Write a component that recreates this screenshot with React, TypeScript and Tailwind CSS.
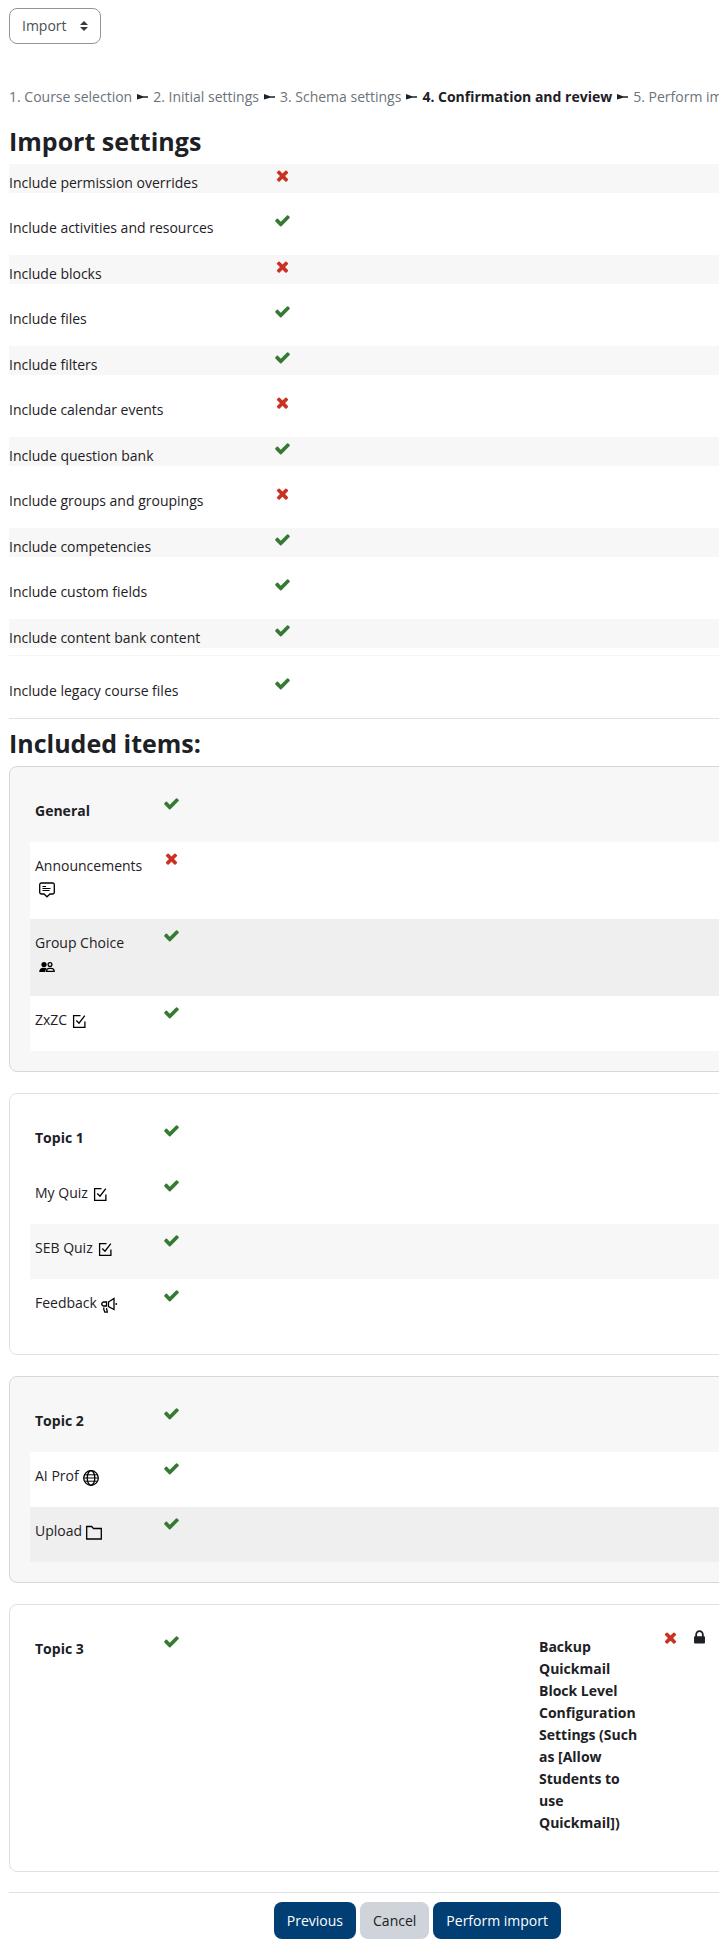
import clsx from 'clsx';
import type { ReactNode } from 'react';

type ActivityIcon = 'forum' | 'group' | 'quiz' | 'feedback' | 'url' | 'folder';

interface Activity {
  name: string;
  included: boolean;
  icon: ActivityIcon;
}

interface Section {
  title: string;
  shaded: boolean;
  activities: Activity[];
}

const STEPS = [
  '1. Course selection',
  '2. Initial settings',
  '3. Schema settings',
  '4. Confirmation and review',
  '5. Perform import',
];
const CURRENT_STEP = 3;

const SETTINGS = [
  { label: 'Include permission overrides', included: false },
  { label: 'Include activities and resources', included: true },
  { label: 'Include blocks', included: false },
  { label: 'Include files', included: true },
  { label: 'Include filters', included: true },
  { label: 'Include calendar events', included: false },
  { label: 'Include question bank', included: true },
  { label: 'Include groups and groupings', included: false },
  { label: 'Include competencies', included: true },
  { label: 'Include custom fields', included: true },
  { label: 'Include content bank content', included: true },
];

const SECTIONS: Section[] = [
  {
    title: 'General',
    shaded: true,
    activities: [
      { name: 'Announcements', included: false, icon: 'forum' },
      { name: 'Group Choice', included: true, icon: 'group' },
      { name: 'ZxZC', included: true, icon: 'quiz' },
    ],
  },
  {
    title: 'Topic 1',
    shaded: false,
    activities: [
      { name: 'My Quiz', included: true, icon: 'quiz' },
      { name: 'SEB Quiz', included: true, icon: 'quiz' },
      { name: 'Feedback', included: true, icon: 'feedback' },
    ],
  },
  {
    title: 'Topic 2',
    shaded: true,
    activities: [
      { name: 'AI Prof', included: true, icon: 'url' },
      { name: 'Upload', included: true, icon: 'folder' },
    ],
  },
];

function StatusIcon({ included }: { included: boolean }) {
  return included ? (
    <svg viewBox="0 0 1792 1792" className="size-[17px] fill-[#357a32]" role="img" aria-label="Yes">
      <path d="M1671 566q0 40-28 68l-724 724-136 136q-28 28-68 28t-68-28l-136-136-362-362q-28-28-28-68t28-68l136-136q28-28 68-28t68 28l294 295 656-657q28-28 68-28t68 28l136 136q28 28 28 68z" />
    </svg>
  ) : (
    <svg viewBox="0 0 1792 1792" className="size-[17px] fill-[#ca3120]" role="img" aria-label="No">
      <path d="M1490 1322q0 40-28 68l-136 136q-28 28-68 28t-68-28l-294-294-294 294q-28 28-68 28t-68-28l-136-136q-28-28-28-68t28-68l294-294-294-294q-28-28-28-68t28-68l136-136q28-28 68-28t68 28l294 294 294-294q28-28 68-28t68 28l136 136q28 28 28 68t-28 68l-294 294 294 294q28 28 28 68z" />
    </svg>
  );
}

function LockIcon() {
  return (
    <svg viewBox="0 0 1792 1792" className="size-[17px] fill-[#1d2125]" role="img" aria-label="Locked">
      <path d="M640 768h512v-192q0-106-75-181t-181-75-181 75-75 181v192zm832 96v576q0 40-28 68t-68 28h-960q-40 0-68-28t-28-68v-576q0-40 28-68t68-28h32v-192q0-184 132-316t316-132 316 132 132 316v192h32q40 0 68 28t28 68z" />
    </svg>
  );
}

const ICON_SHAPES: Record<ActivityIcon, ReactNode> = {
  forum: (
    <>
      <path d="M2.5 1h11a1.800 1.800 0 0 1 1.800 1.800v7.400a1.800 1.800 0 0 1-1.800 1.800H11l-3 2.800L5 12H2.500A1.800 1.800 0 0 1 .7 10.200V2.800A1.800 1.800 0 0 1 2.500 1z" />
      <path strokeWidth="1" d="M3.500 4.500h3.500M3.500 6.500h8M3.500 8.500h7" />
    </>
  ),
  group: (
    <>
      <g fill="currentColor" stroke="none">
        <circle cx="5" cy="5.500" r="2.600" />
        <path d="M.2 13c0-2.600 1.600-4.200 3.800-4.200h1.600c.8 0 1.500.3 2 .8-.8.8-1.300 1.900-1.300 3.400z" />
      </g>
      <circle cx="11" cy="5.500" r="1.900" />
      <path d="M7.500 12.400c0-2 1.200-3.100 2.800-3.100h1.600c1.600 0 3.300 1.100 3.300 3.100z" />
    </>
  ),
  quiz: (
    <>
      <path d="M9.500 1.700H2.600v11.600h11.300V7.500" />
      <path d="M5.300 6.500 8 9.200l5.800-7.500" />
    </>
  ),
  feedback: (
    <>
      <path d="M7.500 5 13 1.500v11L7.500 9.500z" />
      <path d="M5.500 5H2.300L.8 6.200v1.600L2.300 9h3.200z" />
      <path d="M2.800 10.500v2l1 2.700h2.500l-.8-4M15.200 6v2" />
    </>
  ),
  url: (
    <>
      <circle cx="8" cy="8" r="7.300" />
      <ellipse cx="8" cy="8" rx="3.800" ry="7.300" />
      <path d="M.8 8h14.400M2 4.800h12M2 11.200h12" strokeWidth="1" />
    </>
  ),
  folder: <path d="M.7 14V1.500h5l1.800 2h7.800V14z" />,
};

function ModuleIcon({ name }: { name: ActivityIcon }) {
  return (
    <svg
      viewBox="0 0 16 16"
      className="ml-1 inline-block size-4 align-[-5px] text-black"
      fill="none"
      stroke="currentColor"
      strokeWidth="1.300"
      aria-hidden="true"
    >
      {ICON_SHAPES[name]}
    </svg>
  );
}

function SettingRow({ label, included }: { label: string; included: boolean }) {
  return (
    <div className="flex">
      <div className="w-[265px] shrink-0 pt-2">{label}</div>
      <div className="pt-[3px]">
        <StatusIcon included={included} />
      </div>
    </div>
  );
}

function ItemRow({ children, included }: { children: ReactNode; included: boolean }) {
  return (
    <div className="flex min-h-[55px] pl-[5px]">
      <div className="w-[128px] shrink-0 pt-[13px] pr-5 pb-5">{children}</div>
      <div className="pt-2">
        <StatusIcon included={included} />
      </div>
    </div>
  );
}

function SectionCard({ section }: { section: Section }) {
  return (
    <section
      className={clsx(
        'mb-[21px] rounded-lg border p-5',
        section.shaded ? 'border-[#d5d7d8] bg-[#f7f7f7]' : 'border-[#dee2e6] bg-white',
      )}
    >
      <ItemRow included>
        <h3 className="font-bold">{section.title}</h3>
      </ItemRow>
      {section.activities.map((activity, index) => (
        <div
          key={activity.name}
          className={clsx(
            index % 2 === 0 && 'bg-white',
            index % 2 === 1 && (section.shaded ? 'bg-[#efefef]' : 'bg-[#f7f7f7]'),
          )}
        >
          <ItemRow included={activity.included}>
            {activity.name}
            <ModuleIcon name={activity.icon} />
          </ItemRow>
        </div>
      ))}
    </section>
  );
}

export default function App() {
  return (
    <div className="overflow-hidden bg-white pt-2 pb-[10px] pl-[9px] font-['Open_Sans',sans-serif] text-[14px] leading-[22px] text-[#1d2125]">
      <div className="relative inline-block">
        <select
          aria-label="Course reuse"
          className="h-9 w-[92px] appearance-none rounded-lg border border-[#8f959e] bg-white pl-3 text-[#495057]"
        >
          <option>Import</option>
        </select>
        <svg
          viewBox="0 0 8 10"
          className="pointer-events-none absolute top-[13px] right-[13px] h-[10px] w-2 fill-[#343a40]"
          aria-hidden="true"
        >
          <path d="M4 0 8 4H0zM4 10 0 6h8z" />
        </svg>
      </div>

      <nav aria-label="Import steps" className="mt-[42px] flex gap-[5px] whitespace-nowrap text-[#6a737b]">
        {STEPS.map((step, index) => (
          <div key={step} className="flex items-center gap-[5px]">
            {index > 0 && (
              <svg viewBox="0 0 11 6" className="h-[6px] w-[11px] fill-[#1d2125]" aria-hidden="true">
                <path d="M0 0 6 2.300h5v1.400H6L0 5.500z" />
              </svg>
            )}
            <span className={clsx(index === CURRENT_STEP && 'font-bold text-[#1d2125]')}>{step}</span>
          </div>
        ))}
      </nav>

      <main className="-mr-6">
        <h2 className="mt-[17px] mb-[7px] text-[25px] leading-8 font-bold">Import settings</h2>
        <div>
          {SETTINGS.map((setting) => (
            <div key={setting.label} className="mb-4 h-[29px] odd:bg-[#f7f7f7] even:h-[30px]">
              <SettingRow {...setting} />
            </div>
          ))}
        </div>
        <div className="-mt-[9px] border-t border-[#f5f5f5] pt-4 pb-4">
          <SettingRow label="Include legacy course files" included />
        </div>

        <hr className="border-[#dee2e6]" />
        <h2 className="mt-2 mb-[7px] text-[25px] leading-8 font-bold">Included items:</h2>

        {SECTIONS.map((section) => (
          <SectionCard key={section.title} section={section} />
        ))}

        <section className="flex rounded-lg border border-[#dee2e6] p-5">
          <div className="w-[509px] shrink-0">
            <ItemRow included>
              <h3 className="font-bold">Topic 3</h3>
            </ItemRow>
          </div>
          <div className="w-[123px] shrink-0 pt-[11px] pb-[17px] pr-4">
            <h3 className="font-bold">
              Backup Quickmail Block Level Configuration Settings (Such as [Allow Students to use Quickmail])
            </h3>
          </div>
          <div className="flex gap-3 pt-1">
            <StatusIcon included={false} />
            <LockIcon />
          </div>
        </section>
      </main>

      <hr className="mt-5 border-[#dee2e6]" />
      <div className="mt-[9px] mr-[158px] flex justify-end gap-1">
        <button type="button" className="h-[37px] rounded-lg bg-[#003e74] px-[13px] text-white">
          Previous
        </button>
        <button type="button" className="h-[37px] rounded-lg bg-[#ced4da] px-[13px] text-[#1d2125]">
          Cancel
        </button>
        <button type="button" className="h-[37px] rounded-lg bg-[#003e74] px-[13px] text-white">
          Perform import
        </button>
      </div>
    </div>
  );
}
